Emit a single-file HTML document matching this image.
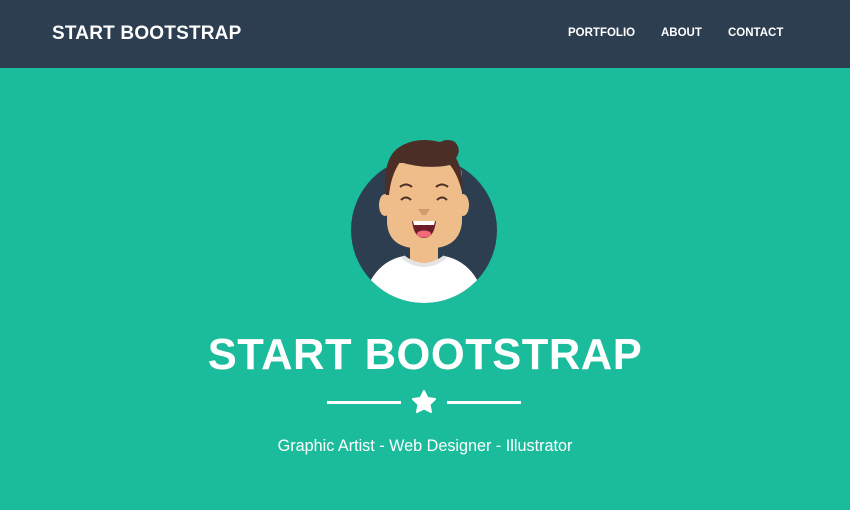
<!DOCTYPE html>
<html><head><style>
body{margin:0;width:850px;height:510px;overflow:hidden;background:#1abc9c;font-family:"Liberation Sans",sans-serif;position:relative}
.nav{position:absolute;left:0;top:0;width:850px;height:68px;background:#2c3e50}
.brand{position:absolute;left:52px;top:23px;color:#fff;font-weight:bold;font-size:19px;letter-spacing:0.2px;white-space:nowrap}
.lnk{position:absolute;top:27px;color:#fff;font-weight:bold;font-size:11.5px}
h1{position:absolute;left:0;width:850px;top:331px;margin:0;text-align:center;color:#fff;font-size:43.5px;font-weight:bold;letter-spacing:0.5px}
.line{position:absolute;top:401px;height:3px;width:74px;background:#fff}
.sub{position:absolute;left:0;width:850px;top:437px;text-align:center;color:#fff;font-size:16.2px}
</style></head><body>
<div class="nav"><div class="brand">START BOOTSTRAP</div>
<div class="lnk" style="left:568px">PORTFOLIO</div>
<div class="lnk" style="left:661px">ABOUT</div>
<div class="lnk" style="left:728px">CONTACT</div></div>
<svg style="position:absolute;left:0;top:0" width="850" height="510">
<defs><clipPath id="c"><circle cx="424" cy="230" r="73"/></clipPath></defs>
<circle cx="424" cy="230" r="73" fill="#2c3e50"/>
<rect x="410" y="238" width="28" height="28" rx="6" fill="#eebd8a"/>
<g clip-path="url(#c)">
<path d="M362 303 Q372 262 404 256 Q424 272 444 256 Q476 262 486 303 Z" fill="#fff"/>
</g>
<path d="M403 257 Q424 273 445 257" stroke="#e4e4e4" stroke-width="4" fill="none"/>
<ellipse cx="385" cy="205" rx="6" ry="11" fill="#eebd8a"/>
<ellipse cx="463" cy="205" rx="6" ry="11" fill="#eebd8a"/>
<path d="M387 175 Q387 165 398 163 L450 163 Q462 165 462 175 L462 222 Q460 245 436 248 L412 248 Q388 245 387 222 Z" fill="#eebd8a"/>
<path d="M386 195 Q382 160 398 148 Q415 136 440 142 Q448 138 455 142 Q462 150 456 158 Q464 172 462 192 Q458 175 450 165 Q425 170 400 162 Q391 175 389 195 Z" fill="#4b2f27"/>
<path d="M400 187 Q406 182 412 187 M436 187 Q442 182 448 187" stroke="#4b2f27" stroke-width="2" fill="none"/>
<path d="M401 200 Q406 195 411 200 M437 200 Q442 195 447 200" stroke="#4b2f27" stroke-width="2" fill="none"/>
<path d="M418 209 L430 209 L426 215 L422 215 Z" fill="#d29a6e"/>
<path d="M412 221 Q424 222 436 221 Q434 238 424 238 Q414 238 412 221 Z" fill="#6d1e2a"/>
<path d="M413 221 L435 221 L434 225 L414 225 Z" fill="#fff"/>
<ellipse cx="424" cy="234" rx="7" ry="3.5" fill="#f46a7a"/>
<path d="M424 391 L427.5 398 L435 399 L429.5 404.5 L431 412 L424 408.5 L417 412 L418.5 404.5 L413 399 L420.5 398 Z" fill="#fff" stroke="#fff" stroke-width="2" stroke-linejoin="round"/>
</svg>
<h1>START BOOTSTRAP</h1>
<div class="line" style="left:327px"></div><div class="line" style="left:447px"></div>
<div class="sub">Graphic Artist - Web Designer - Illustrator</div>
</body></html>
